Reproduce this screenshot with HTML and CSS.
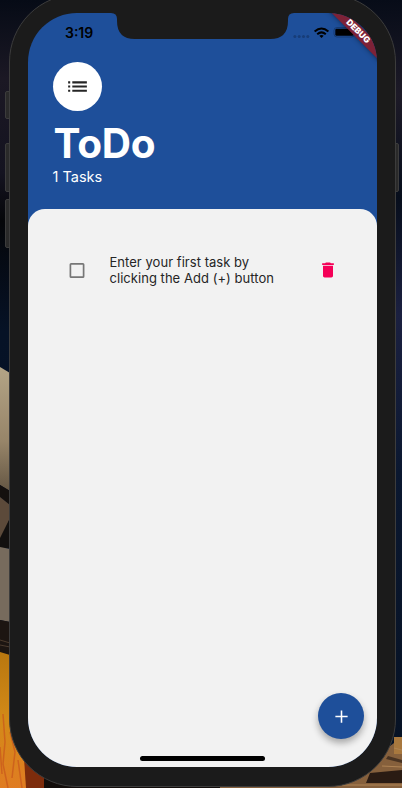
FILE: index.html
```html
<!DOCTYPE html>
<html lang="en">
<head>
<meta charset="utf-8">
<title>ToDo</title>
<link rel="stylesheet" href="styles.css">
</head>
<body>
<div class="desktop">
  <svg class="wallpaper" viewBox="0 0 402 788" aria-hidden="true">
    <defs>
      <linearGradient id="night" x1="0" y1="0" x2="0" y2="1">
        <stop offset="0" stop-color="#060b16"/><stop offset=".1" stop-color="#1b1824"/>
        <stop offset=".22" stop-color="#141320"/><stop offset=".28" stop-color="#050609"/>
        <stop offset=".42" stop-color="#061226"/><stop offset="1" stop-color="#07152b"/>
      </linearGradient>
      <linearGradient id="nightRight" x1="0" y1="0" x2="0" y2="1">
        <stop offset="0" stop-color="#070c18"/><stop offset=".12" stop-color="#1d1a27"/>
        <stop offset=".25" stop-color="#070e1c"/><stop offset=".4" stop-color="#1b2040"/>
        <stop offset=".6" stop-color="#0b1830"/><stop offset="1" stop-color="#061122"/>
      </linearGradient>
      <linearGradient id="stone" x1="0" y1="0" x2="0" y2="1">
        <stop offset="0" stop-color="#b3a486"/><stop offset=".6" stop-color="#978569"/><stop offset="1" stop-color="#655744"/>
      </linearGradient>
      <linearGradient id="flame" x1="0" y1="0" x2="0" y2="1">
        <stop offset="0" stop-color="#b8770f"/><stop offset=".5" stop-color="#d38a18"/><stop offset="1" stop-color="#e07c22"/>
      </linearGradient>
    </defs>
    <rect width="201" height="788" fill="url(#night)"/>
    <rect x="201" width="201" height="788" fill="url(#nightRight)"/>
    <path d="M0 367L10 373V491L0 485Z" fill="url(#stone)"/>
    <path d="M0 485L10 491V505L0 497Z" fill="#14100e"/>
    <path d="M0 497L10 505V518L2 538L0 538Z" fill="#5c4a3a"/>
    <path d="M10 518V548H0V538Z" fill="#12100f"/>
    <path d="M0 547L10 549V622L0 620Z" fill="#776b5d"/>
    <path d="M0 620L10 622V655H0Z" fill="#1c1511"/>
    <path d="M0 645L10 647M0 640L10 643" stroke="#4c3b2d"/>
    <path d="M0 652L10 655V700L52 788H0Z" fill="url(#flame)"/>
    <path d="M3 714L5 742L3 764L8 788M10 732L15 752L12 778M0 747L2 774M18 760L22 788" fill="none" stroke="#c8561c" stroke-opacity=".7" stroke-width="1.5"/>
    <path d="M24 758L45 775V788H26Z" fill="#7d2c0c"/>
    <path d="M44 774L220 786V788H44Z" fill="#120d0b"/>
    <path d="M220 786L350 776L402 737V788H220Z" fill="#86603c"/>
    <path d="M394 737H402V754H394Z" fill="#a8783e"/>
    <path d="M388 756L402 760V763L386 759Z" fill="#493322"/>
    <path d="M370 773L402 770V783H366Z" fill="#2a1b13"/>
    <path d="M394 748L402 750M382 766L402 767M342 785H402" stroke="#b08455"/>
  </svg>

  <span class="key key-mute"></span>
  <span class="key key-up"></span>
  <span class="key key-down"></span>
  <span class="key key-power"></span>

  <div class="phone">
    <div class="screen">
      <svg class="notch" viewBox="0 0 183 26" aria-hidden="true"><path d="M0 0H183Q177 0 177 6V8Q177 26 159 26H24Q6 26 6 8V6Q6 0 0 0Z" fill="#1b1b1b"/></svg>
      <div class="debug">DEBUG</div>

      <header class="header">
        <div class="status">
          <span class="time">3:19</span>
          <svg class="indicators" viewBox="0 0 64 14" aria-hidden="true">
            <g fill="#173d78"><circle cx="1.9" cy="9.5" r="1.5"/><circle cx="6.2" cy="9.5" r="1.5"/><circle cx="10.5" cy="9.5" r="1.5"/><circle cx="14.8" cy="9.5" r="1.5"/></g>
            <g fill="none" stroke="#000" stroke-width="2"><path d="M21.6 4.600Q28.500 -1.500 35.400 4.600"/><path d="M24.200 7.200Q28.500 3.500 32.800 7.200"/></g>
            <path d="M28.500 11L26.300 8.800Q28.500 7.100 30.700 8.800Z"/>
            <rect x="41" y="0.500" width="20.500" height="9.500" rx="3" fill="none" stroke="#163b73"/>
            <rect x="42.300" y="1.800" width="18" height="7" rx="1.300"/>
          </svg>
        </div>
        <div class="avatar">
          <svg viewBox="0 0 24 24" width="25" height="25" fill="#252525" aria-hidden="true"><path d="M3 13h2v-2H3v2zm0 4h2v-2H3v2zm0-8h2V7H3v2zm4 4h14v-2H7v2zm0 4h14v-2H7v2zM7 7v2h14V7H7z"/></svg>
        </div>
        <h1 class="title">ToDo</h1>
        <p class="count">1 Tasks</p>
      </header>

      <main class="sheet">
        <div class="task">
          <svg class="check" viewBox="0 0 16 16" aria-hidden="true"><rect x="1.400" y="1.900" width="13.200" height="13.200" rx=".7" fill="none" stroke="#777" stroke-width="1.700"/></svg>
          <p class="task-text">Enter your first task by<br>clicking the Add (+) button</p>
          <svg class="trash" viewBox="0 0 24 24" fill="#f50057" aria-hidden="true"><path d="M6 19c0 1.100.9 2 2 2h8c1.100 0 2-.9 2-2V7H6v12zM19 4h-3.500l-1-1h-5l-1 1H5v2h14V4z"/></svg>
        </div>
        <div class="fab">
          <svg viewBox="0 0 24 24" width="21" height="21" fill="#fff" aria-hidden="true"><path d="M19 12.900h-6.100V19h-1.800v-6.100H5v-1.800h6.100V5h1.800v6.100H19z"/></svg>
        </div>
        <div class="home"></div>
      </main>
    </div>
  </div>
</div>
</body>
</html>
```

FILE: styles.css
```css
* { box-sizing: border-box; }
body { margin: 0; font-family: Inter, "Liberation Sans", sans-serif; }
h1, p { margin: 0; }

.desktop {
  position: relative;
  width: 402px;
  height: 788px;
  overflow: hidden;
}
.wallpaper { position: absolute; inset: 0; width: 402px; height: 788px; }

.key {
  position: absolute;
  left: 5px;
  width: 7px;
  height: 49px;
  border: 1px solid #3c3c3c;
  border-radius: 2px;
  background: #2a2a2a;
}
.key-mute { top: 91px; height: 28px; }
.key-up { top: 143px; }
.key-down { top: 199px; }
.key-power { top: 143px; left: 392px; }

.phone {
  position: relative;
  width: 387px;
  height: 793px;
  margin: -6px 0 0 9px;
  padding: 18px;
  border: 1px solid #3c3c3c;
  border-radius: 68px;
  background: #1b1b1b;
}
.screen {
  position: relative;
  display: flex;
  flex-direction: column;
  width: 349px;
  height: 754px;
  overflow: hidden;
  border-radius: 49px;
  background: #1e4f9a;
}
.notch { position: absolute; top: 0; left: 83px; width: 183px; height: 26px; }
.debug {
  position: absolute;
  top: 13px;
  right: -28px;
  width: 94px;
  height: 11px;
  transform: rotate(45deg);
  background: #7d2237;
  box-shadow: 0 0 5px rgba(0, 0, 0, .5);
  color: #fff;
  font-size: 8.5px;
  font-weight: 900;
  line-height: 11px;
  text-align: center;
}

.header { height: 196px; padding: 0 24.5px; color: #fff; }
.status {
  display: flex;
  justify-content: space-between;
  height: 49px;
  padding: 12px 0 0 12.5px;
  margin-right: -4px;
}
.time { color: #000; font-size: 14px; font-weight: 600; line-height: 16px; }
.indicators { width: 64px; height: 14px; margin-top: 2px; }
.avatar {
  display: flex;
  align-items: center;
  justify-content: center;
  width: 49px;
  height: 49px;
  border-radius: 50%;
  background: #fff;
}
.title {
  margin: 9px 0 0 1px;
  font-size: 40.5px;
  font-weight: 700;
  letter-spacing: -.2px;
  line-height: 47px;
}
.count { margin-top: 1px; font-size: 14.5px; line-height: 17px; }

.sheet {
  position: relative;
  flex: 1;
  padding: 45px 40px 0;
  border-radius: 17px 17px 0 0;
  background: #f2f2f2;
}
.task { display: flex; align-items: center; }
.check { width: 16px; height: 16px; margin: 0 24.5px 0 1px; }
.task-text {
  flex: 1;
  color: #252525;
  font-size: 13px;
  letter-spacing: .04px;
  line-height: 16px;
  white-space: nowrap;
}
.trash { width: 20px; height: 20px; margin-right: -1px; }
.fab {
  position: absolute;
  right: 13px;
  bottom: 28px;
  display: flex;
  align-items: center;
  justify-content: center;
  width: 46px;
  height: 46px;
  border-radius: 50%;
  background: #1e4f9a;
  box-shadow: 0 4px 7px rgba(0, 0, 0, .32);
}
.home {
  position: absolute;
  bottom: 6px;
  left: 112px;
  width: 125px;
  height: 5px;
  border-radius: 3px;
  background: #000;
}
```
